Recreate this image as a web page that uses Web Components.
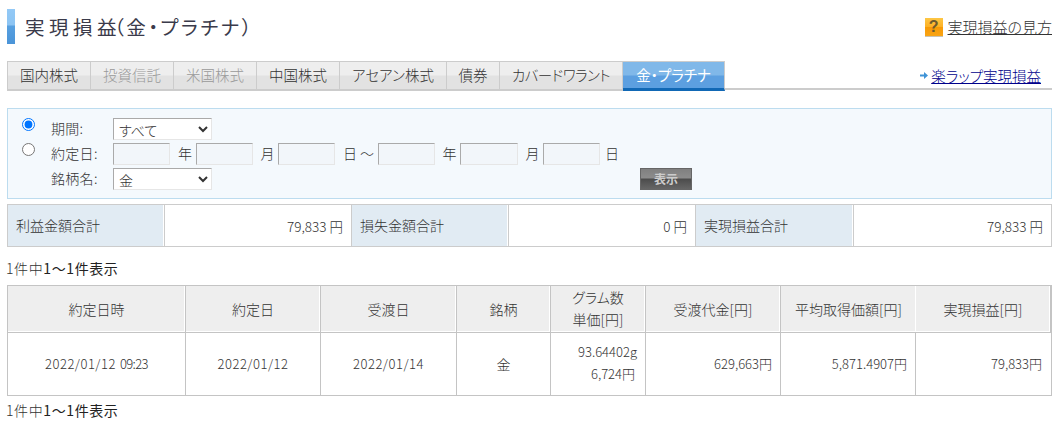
<!DOCTYPE html>
<html lang="ja">
<head>
<meta charset="utf-8">
<title>実現損益</title>
<style>
  html, body { margin: 0; background: #fff; }
  body {
    font: 300 14px/18px "Noto Sans CJK JP", "Noto Sans", sans-serif;
    font-feature-settings: "palt";
    color: #333;
    padding: 9px 10px 0 7px;
    overflow: hidden;
  }
</style>
</head>
<body>
<page-head>
  実現損益<span style="letter-spacing:2.5px;margin-left:-7px">（金・プラチナ）</span>
  <a slot="help">実現損益の見方</a>
</page-head>

<tab-bar>
  <tab-item w="84">国内株式</tab-item>
  <tab-item muted>投資信託</tab-item>
  <tab-item muted>米国株式</tab-item>
  <tab-item>中国株式</tab-item>
  <tab-item w="107">アセアン株式</tab-item>
  <tab-item w="53">債券</tab-item>
  <tab-item w="123" style="letter-spacing:-.5px">カバードワラント</tab-item>
  <tab-item w="102" active>金・プラチナ</tab-item>
  <span slot="link">楽ラップ実現損益</span>
</tab-bar>

<search-panel></search-panel>
<summary-table></summary-table>
<page-count></page-count>
<result-table></result-table>
<page-count tight></page-count>

<script>
const pageHeadTemplate = document.createElement('template')
pageHeadTemplate.innerHTML = `
<style>
  :host { display: flex; align-items: center; height: 35px; }
  .bar {
    width: 8px; height: 35px; margin-right: 10px;
    background: linear-gradient(#93c9f6 0, #8cc4f3 16px, #58a0e0 17px, #4a94d8 100%);
  }
  h1 {
    flex: 1; margin: 0; font: 400 19.5px/35px "Noto Sans CJK JP", sans-serif;
    font-feature-settings: "palt"; letter-spacing: 4.5px; color: #3a3a4a;
  }
  .help { display: flex; align-items: center; gap: 5px; margin-top: 1px; }
  .mark {
    width: 18px; height: 19px; box-sizing: border-box; border-bottom: 1px solid #c9c3b4;
    background: linear-gradient(#fdc746, #fdb023 50%, #f79a06 51%, #f9a414);
    font: 700 16px/18px "Liberation Sans", sans-serif; color: #6d5a2e; text-align: center;
  }
  ::slotted(a) { color: #333; text-decoration: underline; font-size: 15px; }
</style>
<div class="bar"></div>
<h1><slot></slot></h1>
<div class="help"><div class="mark">?</div><slot name="help"></slot></div>
`
customElements.define('page-head', class extends HTMLElement {
  constructor () {
    super()
    this.attachShadow({ mode: 'open' }).appendChild(pageHeadTemplate.content.cloneNode(true))
  }
})

const tabBarTemplate = document.createElement('template')
tabBarTemplate.innerHTML = `
<style>
  :host { display: flex; height: 29px; margin-top: 17px; box-sizing: border-box; border-bottom: 2px solid #ccc; }
  .tabs { display: flex; height: 30px; }
  .link { margin-left: auto; padding-right: 11px; display: flex; align-items: center; gap: 3px; height: 27px; margin-top: 1px; font-size: 14.5px; color: #00008b; text-decoration: underline; }
  svg { display: block; }
</style>
<div class="tabs"><slot></slot></div>
<div class="link"><svg width="8" height="7" viewBox="0 0 8 7"><path d="M0 2.500h4V0l4 3.500L4 7V4.500H0z" fill="#3f93d6"/></svg><slot name="link"></slot></div>
`
customElements.define('tab-bar', class extends HTMLElement {
  constructor () {
    super()
    this.attachShadow({ mode: 'open' }).appendChild(tabBarTemplate.content.cloneNode(true))
  }
})

const tabItemTemplate = document.createElement('template')
tabItemTemplate.innerHTML = `
<style>
  :host {
    display: flex; align-items: center; justify-content: center;
    box-sizing: border-box; width: 83px; height: 30px;
    border: 1px solid #ccc; border-width: 1px 1px 2px 0;
    background: linear-gradient(#eee 0, #eee 13px, #e2e2e2 14px);
    color: #333; font-size: 14.5px; padding-bottom: 1px;
  }
  :host(:first-child) { border-left-width: 1px; }
  :host([muted]) { color: #999; }
  :host([active]) {
    background: linear-gradient(#80b8e9 0, #80b8e9 13px, #5c9fe0 14px);
    border-bottom: 3px solid #1168b5; border-right-color: #ccc;
    color: #fff; font-weight: 400;
  }
</style>
<slot></slot>
`
customElements.define('tab-item', class extends HTMLElement {
  constructor () {
    super()
    this.attachShadow({ mode: 'open' }).appendChild(tabItemTemplate.content.cloneNode(true))
    if (this.hasAttribute('w')) this.style.width = this.getAttribute('w') + 'px'
  }
})

const searchTemplate = document.createElement('template')
searchTemplate.innerHTML = `
<style>
  :host {
    display: grid; box-sizing: border-box; height: 91px; margin-top: 18px;
    padding: 9px 0 0 14px;
    grid-template-columns: 30px 61px 1fr; grid-auto-rows: 25px;
    border: 1px solid #bcdcef; background: #f4f9fd;
  }
  input[type=radio] { display: block; margin: 0; width: 13px; height: 13px; }
  label { line-height: 20px; letter-spacing: .3px; margin-left: -1px; }
  .row { display: flex; align-items: flex-start; height: 25px; position: relative; }
  select {
    width: 99px; height: 22px; box-sizing: border-box; padding: 0 0 0 1px;
    border: 1px solid; border-color: #aaa #e6e6e6 #e6e6e6 #aaa; background: #fff;
    font: 300 14px "Noto Sans CJK JP", sans-serif; font-feature-settings: "palt"; color: #333; border-radius: 0;
  }
  input[type=text] {
    height: 22px; box-sizing: border-box; margin: 0; padding: 0;
    border: 1px solid; border-color: #aaa #e6e6e6 #e6e6e6 #aaa; background: #f2f6fa;
  }
  .dates { display: grid; grid-template-columns: 57px 26px 57px 25px 57px 43px 57px 25px 58px 25px 57px 20px; }
  .dates span { text-align: center; line-height: 20px; padding-left: 4px; white-space: nowrap; }
  .go {
    position: absolute; left: 527px; top: 0; width: 52px; height: 22px; box-sizing: border-box;
    border: 1px solid #666; padding: 0;
    background: linear-gradient(#808080 0, #8c8c8c 9px, #4c4c4c 10px, #666 100%);
    color: #ccc; font: 700 12px/20px "Noto Sans CJK JP", sans-serif;
  }
</style>
<div><input type="radio" name="k" checked></div><label>期間:</label>
<div class="row"><select><option>すべて</option></select></div>
<div><input type="radio" name="k"></div><label>約定日:</label>
<div class="row dates">
  <input type="text"><span>年</span><input type="text"><span>月</span><input type="text"><span>日 〜</span>
  <input type="text"><span>年</span><input type="text"><span>月</span><input type="text"><span>日</span>
</div>
<div></div><label>銘柄名:</label>
<div class="row"><select><option>金</option></select><button class="go">表示</button></div>
`
customElements.define('search-panel', class extends HTMLElement {
  constructor () {
    super()
    this.attachShadow({ mode: 'open' }).appendChild(searchTemplate.content.cloneNode(true))
  }
})

const summaryTemplate = document.createElement('template')
summaryTemplate.innerHTML = `
<style>
  :host {
    display: grid; box-sizing: border-box; height: 43px; margin-top: 5px;
    grid-template-columns: 156px 188px 156px 188px 157px 1fr;
    border: 1px solid #ccc;
  }
  div { display: flex; align-items: center; padding: 0 8px; box-sizing: border-box; }
  .k { background: #e1ebf3; border-right: 1px solid #fff; padding-bottom: 1px; }
  .v {
    justify-content: flex-end; border-left: 1px solid #ccc; border-right: 1px solid #ccc;
    font-size: 13.5px;
  }
  div:last-child { border-right: 0; }
</style>
<div class="k">利益金額合計</div><div class="v">79,833 円</div>
<div class="k">損失金額合計</div><div class="v">0 円</div>
<div class="k">実現損益合計</div><div class="v">79,833 円</div>
`
customElements.define('summary-table', class extends HTMLElement {
  constructor () {
    super()
    this.attachShadow({ mode: 'open' }).appendChild(summaryTemplate.content.cloneNode(true))
  }
})

const countTemplate = document.createElement('template')
countTemplate.innerHTML = `
<style>
  :host { display: block; height: 38px; padding-top: 12px; box-sizing: border-box; margin-left: -1px; color: #333; letter-spacing: .6px; }
  :host([tight]) { height: 26px; padding-top: 5px; }
  b { font-weight: 400; color: #222; }
</style>
1件中<b>1〜1件表示</b>
`
customElements.define('page-count', class extends HTMLElement {
  constructor () {
    super()
    this.attachShadow({ mode: 'open' }).appendChild(countTemplate.content.cloneNode(true))
  }
})

const resultTemplate = document.createElement('template')
resultTemplate.innerHTML = `
<style>
  :host {
    display: grid; box-sizing: border-box; height: 111px;
    grid-template-columns: 178px 135px 136px 94px 95px 135px 135px 1fr;
    grid-template-rows: 47px 1fr;
    border: 1px solid #c4c4c4; border-width: 1px 1px 0 1px;
    font-size: 13px;
  }
  div {
    display: flex; align-items: center; justify-content: center; text-align: center;
    box-sizing: border-box; border-right: 1px solid #c4c4c4; border-bottom: 1px solid #c4c4c4;
  }
  div:nth-child(8), div:last-child { border-right: 0; }
  .h { background: #eee; line-height: 22px; box-shadow: inset -1px -1px 0 #fff; font-size: 14px; }
  .up { padding-bottom: 3px; }
  .d { letter-spacing: .5px; }
  .d i { font-style: normal; letter-spacing: -.6px; margin-left: 4px; }
  .r { justify-content: flex-end; padding-right: 8px; }
  .two { text-align: right; line-height: 22px; padding-bottom: 2px; }
  .two span { display: block; padding-right: 2px; }
  p { margin: 0; }
</style>
<div class="h">約定日時</div>
<div class="h">約定日</div>
<div class="h">受渡日</div>
<div class="h">銘柄</div>
<div class="h up">グラム数<br>単価[円]</div>
<div class="h">受渡代金[円]</div>
<div class="h">平均取得価額[円]</div>
<div class="h">実現損益[円]</div>
<div class="d"><span>2022/01/12</span><i>09:23</i></div>
<div class="d">2022/01/12</div>
<div class="d">2022/01/14</div>
<div style="font-size:14px">金</div>
<div class="r two"><p>93.64402g<span>6,724円</span></p></div>
<div class="r">629,663円</div>
<div class="r">5,871.4907円</div>
<div class="r" style="padding-right:9px">79,833円</div>
`
customElements.define('result-table', class extends HTMLElement {
  constructor () {
    super()
    this.attachShadow({ mode: 'open' }).appendChild(resultTemplate.content.cloneNode(true))
  }
})
</script>
</body>
</html>
